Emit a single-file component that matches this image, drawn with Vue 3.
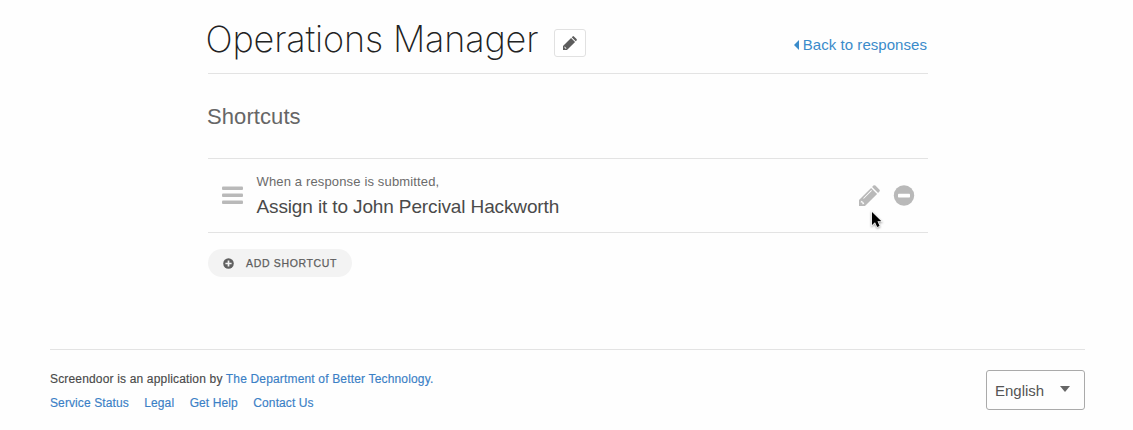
<script setup>
const footerLinks = ['Service Status', 'Legal', 'Get Help', 'Contact Us']
</script>

<template>
  <div class="page">
    <main>
      <header>
        <h1>Operations Manager</h1>
        <button class="edit" aria-label="Edit name">
          <svg width="14" height="14" viewBox="0 0 21 21"><path fill="#5c5c5c" fill-rule="evenodd" d="M0 21V15L12.1 2.9 18.1 8.9 6 21ZM1.7 16.8V17.4H3.4V19.3H4.3L5.3 18.3 2.7 15.7ZM13.1 1.9 14.4.6Q15.3-.3 16.4.6L20.3 4.5Q21.3 5.6 20.4 6.6L19.1 7.9Z" /></svg>
        </button>
        <a class="back"><i class="caret-left"></i><span>Back to responses</span></a>
      </header>
      <h2>Shortcuts</h2>
      <section class="shortcut">
        <svg class="handle" width="21" height="18" viewBox="0 0 21 18" fill="#b9b9b9"><rect width="21" height="3.5" y=".6" rx="1" /><rect width="21" height="3.5" y="7.6" rx="1" /><rect width="21" height="3.5" y="14.5" rx="1" /></svg>
        <div class="text">
          <p class="when">When a response is submitted,</p>
          <p class="action">Assign it to John Percival Hackworth</p>
        </div>
        <div class="actions">
          <svg width="21" height="21" viewBox="0 0 21 21"><path fill="#b9b9b9" fill-rule="evenodd" d="M0 21V15L12.1 2.9 18.1 8.9 6 21ZM1.7 16.8V17.4H3.4V19.3H4.3L5.3 18.3 2.7 15.7ZM4.8 13.8 12.9 5.7 12.3 5.1 4.2 13.2ZM13.1 1.9 14.4.6Q15.3-.3 16.4.6L20.3 4.5Q21.3 5.6 20.4 6.6L19.1 7.9Z" /></svg>
          <svg width="22" height="22" viewBox="0 0 22 22"><circle cx="11" cy="10.5" r="10.2" fill="#b9b9b9" /><rect x="5" y="8.8" width="12" height="3.6" rx=".7" fill="#fff" /></svg>
          <svg class="cursor" width="16" height="22" viewBox="0 0 16 22"><path d="M3 3V16L6 13.2 8.2 18 10.6 17 8.5 12.3H12.4Z" fill="#000" stroke="#fff" stroke-width="1.2" paint-order="stroke" /></svg>
        </div>
      </section>
      <button class="add">
        <svg width="11" height="11" viewBox="0 0 11 11"><circle cx="5.5" cy="5.5" r="5.3" fill="#606060" /><path d="M5.5 2.4V8.6M2.4 5.5H8.6" stroke="#f3f3f3" stroke-width="1.7" /></svg>
        <span>ADD SHORTCUT</span>
      </button>
    </main>
    <footer>
      <div>
        <p class="credit">Screendoor is an application by <a>The Department of Better Technology.</a></p>
        <nav><a v-for="link in footerLinks" :key="link">{{ link }}</a></nav>
      </div>
      <div class="select"><span>English</span><i></i></div>
    </footer>
  </div>
</template>

<style>
html, body { background: #fefefe; }
</style>
<style scoped>
* { box-sizing: border-box; margin: 0; padding: 0; }
.page { height: 430px; overflow: hidden; font-family: "Liberation Sans", Arial, sans-serif; color: #4a4a4a; display: flex; flex-direction: column; }
button { font: inherit; }
main { width: 720px; margin-left: 208px; height: 349px; }
header { height: 74px; border-bottom: 1px solid #e3e3e3; display: flex; align-items: flex-start; }
h1 { font: 200 36px/44px Inter, sans-serif; color: #222; margin: 17px 0 0 -2.5px; white-space: nowrap; width: 348.5px; letter-spacing: -.15px; }
.edit { width: 32px; height: 28px; margin-top: 29px; background: #fff; border: 1px solid #e1e1e1; border-radius: 3px; display: flex; align-items: center; justify-content: center; }
.back { margin: 35px 1px 0 auto; display: flex; align-items: center; gap: 4px; color: #3a8bca; font-size: 15px; line-height: 20px; white-space: nowrap; letter-spacing: .05px; }
.caret-left { border: solid transparent; border-width: 5px 5px 5px 0; border-right-color: #3a8bca; }
h2 { font-weight: 400; font-size: 22px; line-height: 26px; color: #666; margin: 30px 0 0 -1px; letter-spacing: .08px; }
.shortcut { height: 75px; margin-top: 28px; border: solid #e3e3e3; border-width: 1px 0; display: flex; }
.handle { margin: 27px 13.5px 0 14px; }
.when { font-size: 13px; line-height: 18px; margin-top: 14px; color: #6b6b6b; letter-spacing: .15px; white-space: nowrap; }
.action { font-size: 19px; line-height: 24px; margin-top: 4px; letter-spacing: -.13px; white-space: nowrap; }
.actions { margin: 26px 13px 0 auto; display: flex; gap: 13px; position: relative; height: 22px; }
.cursor { position: absolute; left: 10px; top: 23.5px; filter: drop-shadow(0 1px 1px #0006); }
.add { margin-top: 16px; width: 144px; height: 28px; border: 0; border-radius: 14px; background: #f3f3f3; display: flex; align-items: center; gap: 12px; padding-left: 15px; font-size: 10.5px; color: #5d5d5d; letter-spacing: .66px; white-space: nowrap; -webkit-text-stroke: .25px; }
footer { width: 1035px; margin-left: 50px; border-top: 1px solid #e3e3e3; display: flex; justify-content: space-between; font-size: 12px; line-height: 24px; letter-spacing: .165px; }
footer a { color: #3a80c6; }
.credit { margin-top: 17px; -webkit-text-stroke: .15px; white-space: nowrap; }
nav { display: flex; gap: 15.5px; letter-spacing: .1px; -webkit-text-stroke: .15px; }
.select { width: 99px; height: 40px; margin-top: 20px; border: 1px solid #aaa; border-radius: 3px; display: flex; align-items: center; justify-content: space-between; padding: 1px 14px 0 8px; font-size: 15px; letter-spacing: 0; color: #555; }
.select i { border: solid transparent; border-width: 6px 5px 0; border-top-color: #666; margin-top: -4px; }
</style>
